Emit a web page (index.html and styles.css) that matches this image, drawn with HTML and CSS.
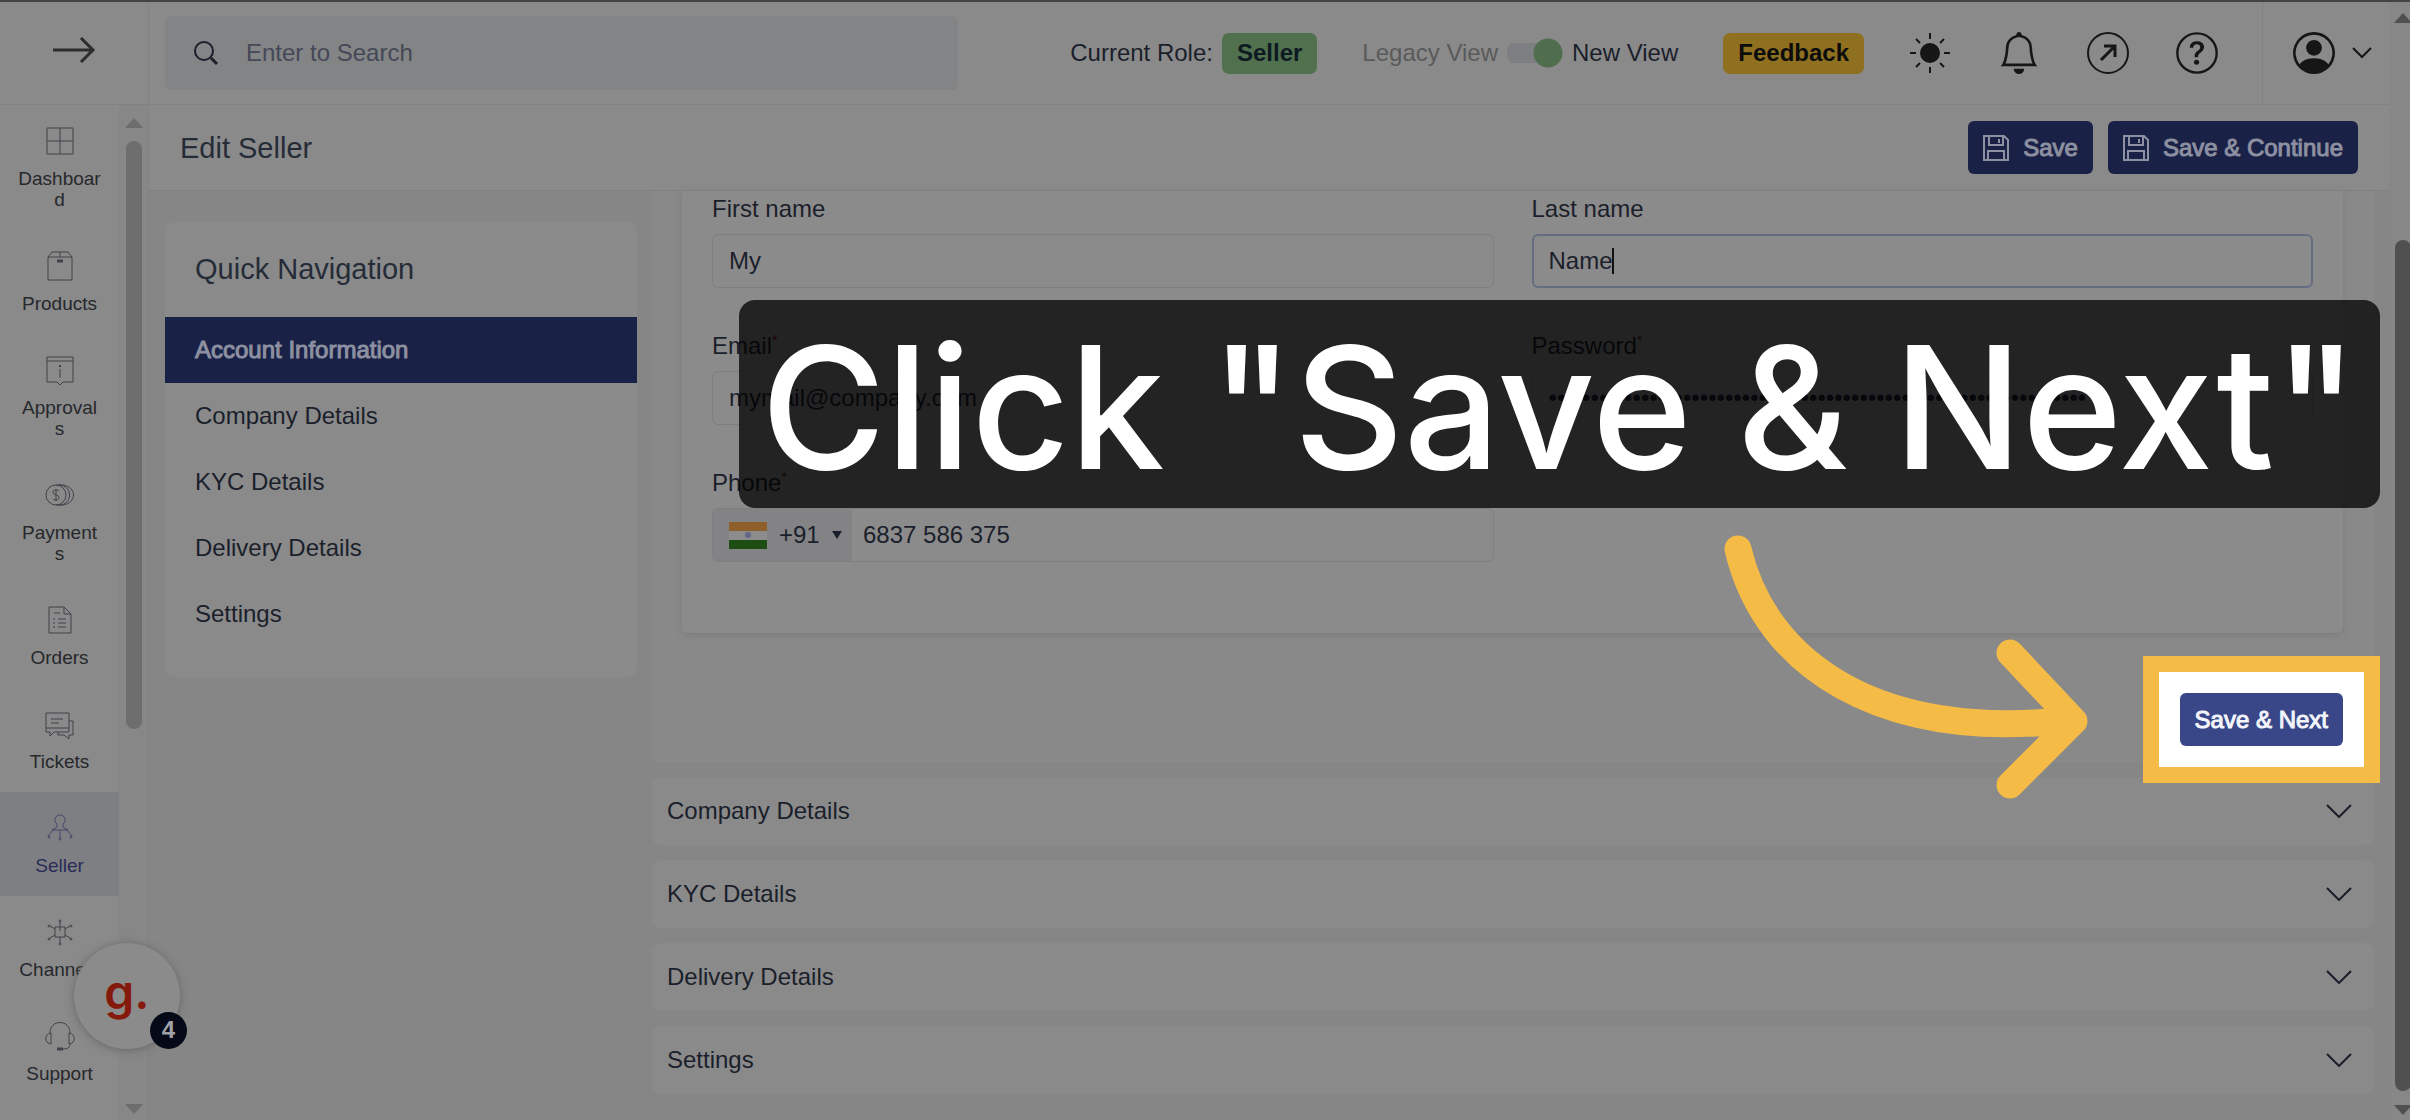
FILE: index.html
```html
<!DOCTYPE html>
<html lang="en">
<head>
    <meta charset="UTF-8">
    <meta name="viewport" content="width=device-width, initial-scale=1.0">
    <title>Edit Seller</title>
    <link rel="stylesheet" href="styles.css">
</head>
<body>

<div class="app">
    <aside class="sidebar">
        <button class="menu-toggle" aria-label="Expand menu">
            <svg width="44" height="30" viewBox="0 0 44 30"><path d="M1 15h40M29 3l12 12-12 12" stroke-width="3"/></svg>
        </button>
        <div class="sidebar-body">
            <nav class="menu">
                <a href="#" class="menu-item">
                    <svg viewBox="0 0 30 30"><path d="M2 2h26v26H2zM15 2v26M2 15h26"/></svg>
                    <span>Dashboard</span>
                </a>
                <a href="#" class="menu-item">
                    <svg viewBox="0 0 30 30"><path d="M3 6l4-5h16l4 5v23H3zM3 6h24M15 1v5"/><path d="M12 10h6" stroke-width="3"/></svg>
                    <span>Products</span>
                </a>
                <a href="#" class="menu-item">
                    <svg viewBox="0 0 30 30"><path d="M2 2h26v25H18l-3 3-3-3H2zM2 6h26M15 14v9"/><path d="M15 10v2" stroke-width="2"/></svg>
                    <span>Approvals</span>
                </a>
                <a href="#" class="menu-item">
                    <svg viewBox="0 0 30 30"><circle cx="11" cy="15" r="10"/><path d="M14 5c14 0 14 20 0 20M18 5c14 2 14 18 0 20M11 5h7M11 25h7M14 11c-2-2-6-1-6 1 0 4 6 2 6 6 0 2-4 3-6 1M11 9v12"/></svg>
                    <span>Payments</span>
                </a>
                <a href="#" class="menu-item">
                    <svg viewBox="0 0 30 30"><path d="M4 2h15l7 7v19H4zM19 2v7h7M9 8h6M13 14h8M13 18h8M13 22h8M8 14h2M8 18h2M8 22h2"/></svg>
                    <span>Orders</span>
                </a>
                <a href="#" class="menu-item">
                    <svg viewBox="0 0 30 30"><path d="M1 4h23v19H9l-4 4v-4H1zM24 12h4v14h-4v4l-5-4h-6v-3M1 19h23M6 10h12M6 14h8"/></svg>
                    <span>Tickets</span>
                </a>
                <a href="#" class="menu-item active">
                    <svg viewBox="0 0 30 30"><path d="M12 11c-4-3-2-9 3-9s7 6 3 9v3l5 3H7l5-3zM15 17v8M8 17l-5 6M22 17l5 6"/><circle cx="4" cy="24" r="1"/><circle cx="15" cy="26" r="1"/><circle cx="26" cy="24" r="1"/></svg>
                    <span>Seller</span>
                </a>
                <a href="#" class="menu-item">
                    <svg viewBox="0 0 30 30"><path d="M10 10h10v10H10zM15 10V4M15 20v6M10 12l-5-3M20 12l5-3M10 18l-5 3M20 18l5 3M15 10v4"/><circle cx="15" cy="4" r="1"/><circle cx="15" cy="27" r="1"/><circle cx="4" cy="9" r="1"/><circle cx="26" cy="9" r="1"/><circle cx="4" cy="22" r="1"/><circle cx="26" cy="22" r="1"/></svg>
                    <span>Channels</span>
                </a>
                <a href="#" class="menu-item">
                    <svg viewBox="0 0 30 30"><path d="M5 12C5-2 25-2 25 12M6 12v11c-7-1-7-10 0-11zM24 12v11c7-1 7-10 0-11zM25 23c0 4-3 5-7 5"/><path d="M12 28h6" stroke-width="3"/></svg>
                    <span>Support</span>
                </a>
            </nav>
            <div class="scroll scroll-menu">
                <span class="arrow-up"></span>
                <span class="thumb"></span>
                <span class="arrow-down"></span>
            </div>
        </div>
    </aside>

    <div class="page">
        <header class="topbar">
            <label class="search">
                <svg width="26" height="26" viewBox="0 0 26 26"><circle cx="11" cy="11" r="9" stroke-width="2"/><path d="M18 18l6 6" stroke-width="3"/></svg>
                <input type="text" placeholder="Enter to Search">
            </label>
            <div class="tools">
                <div class="pair">Current Role: <span class="badge role">Seller</span></div>
                <label class="pair">
                    <span class="muted">Legacy View</span>
                    <input type="checkbox" class="switch" checked>
                    New View
                </label>
                <button class="badge feedback">Feedback</button>
                <button class="icon-btn" aria-label="Theme">
                    <svg viewBox="0 0 42 42"><circle class="solid" cx="21" cy="21" r="10"/><path d="M21 1v6M21 35v6M1 21h6M35 21h6M7 7l4 4M31 31l4 4M35 7l-4 4M11 31l-4 4" stroke-width="2"/></svg>
                </button>
                <button class="icon-btn" aria-label="Notifications">
                    <svg viewBox="0 0 16 16"><path class="solid" d="M8 16a2 2 0 0 0 2-2H6a2 2 0 0 0 2 2M8 1.918l-.797.161A4 4 0 0 0 4 6c0 .628-.134 2.197-.459 3.742-.16.767-.376 1.566-.663 2.258h10.244c-.287-.692-.502-1.49-.663-2.258C12.134 8.197 12 6.628 12 6a4 4 0 0 0-3.203-3.92zM14.22 12c.223.447.481.801.78 1H1c.299-.199.557-.553.78-1C2.68 10.2 3 6.88 3 6c0-2.42 1.72-4.44 4.005-4.901a1 1 0 1 1 1.99 0A5 5 0 0 1 13 6c0 .88.32 4.2 1.22 6"/></svg>
                </button>
                <button class="icon-btn" aria-label="Open">
                    <svg viewBox="0 0 42 42"><circle cx="21" cy="21" r="20" stroke-width="2"/><path d="M14 28l14-14M17 14h11v11" stroke-width="3"/></svg>
                </button>
                <button class="icon-btn" aria-label="Help">
                    <svg viewBox="0 0 16 16"><circle cx="8" cy="8" r="7.5" stroke-width=".9"/><path class="solid" d="M5.255 5.786a.237.237 0 0 0 .241.247h.825c.138 0 .248-.113.266-.25.09-.656.54-1.134 1.342-1.134.686 0 1.314.343 1.314 1.168 0 .635-.374.927-.965 1.371-.673.489-1.206 1.06-1.168 1.987l.003.217a.25.25 0 0 0 .25.246h.811a.25.25 0 0 0 .25-.25v-.105c0-.718.273-.927 1.01-1.486.609-.463 1.244-.977 1.244-2.056 0-1.511-1.276-2.241-2.673-2.241-1.267 0-2.655.59-2.75 2.286m1.557 5.763c0 .533.425.927 1.01.927.609 0 1.028-.394 1.028-.927 0-.552-.42-.94-1.029-.94-.584 0-1.009.388-1.009.94"/></svg>
                </button>
            </div>
            <button class="user" aria-label="Account">
                <svg width="42" height="42" viewBox="0 0 16 16"><path class="solid" d="M11 6a3 3 0 1 1-6 0 3 3 0 0 1 6 0"/><path class="solid" fill-rule="evenodd" d="M0 8a8 8 0 1 1 16 0A8 8 0 0 1 0 8m8-7a7 7 0 0 0-5.468 11.37C3.242 11.226 4.805 10 8 10s4.757 1.225 5.468 2.37A7 7 0 0 0 8 1"/></svg>
                <svg width="20" height="12" viewBox="0 0 20 12"><path d="M1 1l9 9 9-9" stroke-width="2"/></svg>
            </button>
        </header>

        <div class="titlebar">
            <h1>Edit Seller</h1>
            <button class="btn">
                <svg width="26" height="26" viewBox="0 0 26 26"><path d="M1 1h20l4 4v20H1zM6 1v9h14V1M16 4v4M5 25v-9h16v9" stroke-width="2"/></svg>
                Save
            </button>
            <button class="btn">
                <svg width="26" height="26" viewBox="0 0 26 26"><path d="M1 1h20l4 4v20H1zM6 1v9h14V1M16 4v4M5 25v-9h16v9" stroke-width="2"/></svg>
                Save &amp; Continue
            </button>
        </div>

        <main class="content">
            <nav class="quick-nav">
                <h2>Quick Navigation</h2>
                <a href="#account" class="active">Account Information</a>
                <a href="#company">Company Details</a>
                <a href="#kyc">KYC Details</a>
                <a href="#delivery">Delivery Details</a>
                <a href="#settings">Settings</a>
            </nav>

            <div class="sections">
                <section class="account" id="account">
                    <form class="form-card">
                        <div class="field">
                            <label for="firstName">First name</label>
                            <input type="text" id="firstName" value="My">
                        </div>
                        <div class="field focused">
                            <label for="lastName">Last name</label>
                            <input type="text" id="lastName" value="Name">
                            <span class="caret"></span>
                        </div>
                        <div class="field">
                            <label for="email">Email<sup>*</sup></label>
                            <input type="email" id="email" value="mymail@company.com">
                        </div>
                        <div class="field">
                            <label for="password">Password<sup>*</sup></label>
                            <input type="password" id="password" value="0123456789012345678901234567890123456789012345678901234567890123">
                        </div>
                        <div class="field">
                            <label for="phone">Phone<sup>*</sup></label>
                            <div class="phone">
                                <div class="country">
                                    <svg class="flag" width="38" height="27" viewBox="0 0 38 27"><path d="M0 0h38v9H0z" fill="#8f5f2b"/><path d="M0 9h38v9H0z" fill="#8c8c8c"/><path d="M0 18h38v9H0z" fill="#1d4d12"/><circle cx="19" cy="13" r="3" fill="#66668a"/></svg>
                                    <select aria-label="Country code"><option>+91</option></select>
                                    <svg width="10" height="8" viewBox="0 0 10 8"><path class="solid" d="M0 0h10L5 8z"/></svg>
                                </div>
                                <input type="tel" id="phone" value="6837 586 375">
                            </div>
                        </div>
                    </form>
                    <div class="form-actions">
                        <span class="highlight"><button class="btn">Save &amp; Next</button></span>
                    </div>
                </section>

                <button class="panel" id="company">Company Details
                    <svg width="26" height="14" viewBox="0 0 26 14"><path d="M1 1l12 12L25 1" stroke-width="2"/></svg>
                </button>
                <button class="panel" id="kyc">KYC Details
                    <svg width="26" height="14" viewBox="0 0 26 14"><path d="M1 1l12 12L25 1" stroke-width="2"/></svg>
                </button>
                <button class="panel" id="delivery">Delivery Details
                    <svg width="26" height="14" viewBox="0 0 26 14"><path d="M1 1l12 12L25 1" stroke-width="2"/></svg>
                </button>
                <button class="panel" id="settings">Settings
                    <svg width="26" height="14" viewBox="0 0 26 14"><path d="M1 1l12 12L25 1" stroke-width="2"/></svg>
                </button>
            </div>
        </main>
    </div>

    <div class="scroll scroll-page">
        <span class="arrow-up"></span>
        <span class="thumb"></span>
        <span class="arrow-down"></span>
    </div>
</div>

<!-- Tour overlays -->
<div class="caption">Click "Save &amp; Next"</div>
<svg class="pointer" width="370" height="270" viewBox="0 0 370 270">
    <path d="M18 18C45 134 160 211 350 189M290 122l64 68-64 64"/>
</svg>
<button class="widget"><span class="logo">g.</span><span class="count">4</span></button>

</body>
</html>
```
FILE: styles.css
```css
* {
    box-sizing: border-box;
}
body {
    margin: 0;
    position: relative;
    font-family: "Liberation Sans", Arial, sans-serif;
    font-size: 24px;
    line-height: 28px;
    color: #1b1f2b;
    background-color: #868686;
    overflow: hidden;
}
button, input, select {
    font: inherit;
    color: inherit;
    border: 0;
    padding: 0;
    background: none;
}
svg {
    flex: none;
    fill: none;
    stroke: currentColor;
}
.solid {
    fill: currentColor;
    stroke: none;
}
a {
    color: inherit;
    text-decoration: none;
}
h1, h2 {
    margin: 0;
    font-size: 29px;
    font-weight: normal;
    line-height: 36px;
    color: #252c38;
}
.app {
    display: flex;
    min-height: 100vh;
    border-top: 2px solid #444;
}

/* Sidebar */
.sidebar {
    width: 149px;
    display: flex;
    flex-direction: column;
    background-color: #8a8a8a;
    border-right: 1px solid #828282;
}
.menu-toggle {
    height: 103px;
    border-bottom: 1px solid #828282;
    padding-bottom: 6px;
    display: flex;
    align-items: center;
    justify-content: center;
    color: #2c2c2c;
}
.sidebar-body {
    flex: 1;
    display: flex;
}
.menu {
    flex: 1;
}
.menu-item {
    display: flex;
    flex-direction: column;
    align-items: center;
    gap: 12px;
    padding: 21px 18px 20px;
    font-size: 19px;
    line-height: 21px;
    text-align: center;
    color: #26282c;
}
.menu-item svg {
    width: 30px;
    height: 30px;
    color: #404248;
}
.menu-item span {
    width: 100%;
    overflow-wrap: anywhere;
}
.menu-item.active {
    background-color: #7d7f83;
    color: #2b2c57;
}
.menu-item.active svg {
    color: #45466a;
}

/* Scroll bars */
.scroll {
    display: flex;
    flex-direction: column;
    align-items: center;
    color: #6e6e6e;
    background-color: #878787;
}
.thumb {
    width: 16px;
    border-radius: 8px;
    background-color: currentColor;
}
.arrow-up, .arrow-down {
    border: 9px solid transparent;
}
.arrow-up {
    border-top: 0;
    border-bottom: 10px solid currentColor;
}
.arrow-down {
    border-bottom: 0;
    border-top: 10px solid currentColor;
    margin-top: auto;
}
.scroll-menu {
    width: 29px;
    padding: 13px 0 6px;
}
.scroll-menu .thumb {
    margin-top: 13px;
    height: 59%;
}
.scroll-page {
    width: 21px;
    padding: 11px 0 5px 6px;
    color: #505050;
}
.scroll-page .thumb {
    flex: 1;
    margin: 217px 0 14px;
}

/* Top bar */
.page {
    flex: 1;
    min-width: 0;
}
.topbar {
    display: flex;
    align-items: stretch;
    height: 103px;
    padding-left: 16px;
    background-color: #8a8a8a;
    border-bottom: 1px solid #828282;
}
.search {
    flex: 0 1 793px;
    display: flex;
    align-items: center;
    gap: 27px;
    margin: 14px 0;
    padding: 0 28px;
    border-radius: 6px;
    background-color: #828486;
}
.search input {
    flex: 1;
}
.search input::placeholder {
    color: #454856;
    opacity: 1;
}
.tools {
    margin-left: auto;
    display: flex;
    align-items: center;
    gap: 45px;
    padding-right: 44px;
    white-space: nowrap;
}
.pair {
    display: flex;
    align-items: center;
    gap: 9px;
}
.muted {
    color: #5a5a5a;
}
.badge {
    padding: 6px 15px 7px;
    border-radius: 7px;
    font-weight: bold;
}
.role {
    background-color: #50704e;
    color: #0e1a22;
}
.feedback {
    background-color: #8e7020;
    color: #0c0c0c;
}
.switch {
    appearance: none;
    width: 56px;
    height: 30px;
    margin: 0;
    border-radius: 15px;
    background: radial-gradient(circle at 41px 15px, #506d4e 14px, transparent 15px), linear-gradient(#7d7f82, #7d7f82) 0 5px / 42px 20px no-repeat;
}
.icon-btn {
    height: 42px;
    color: #161616;
}
.icon-btn svg {
    width: 42px;
    height: 42px;
}
.icon-btn + .icon-btn {
    margin-left: 2px;
}
.user {
    width: 127px;
    display: flex;
    align-items: center;
    justify-content: flex-end;
    gap: 17px;
    padding-right: 17px;
    border-left: 1px solid #808080;
    color: #161616;
}

/* Title bar */
.titlebar {
    display: flex;
    align-items: center;
    gap: 15px;
    height: 86px;
    padding: 0 31px;
    background-color: #8a8a8a;
    border-bottom: 1px solid #808080;
}
.titlebar h1 {
    flex: 1;
}
.btn {
    display: flex;
    align-items: center;
    gap: 14px;
    height: 53px;
    padding: 0 15px;
    border-radius: 6px;
    background-color: #192147;
    color: #8d90a0;
    -webkit-text-stroke: 1px;
    white-space: nowrap;
}

/* Content */
.content {
    display: flex;
    align-items: flex-start;
    gap: 15px;
    padding: 0 15px 0 16px;
}
.quick-nav {
    flex: 0 1 472px;
    margin-top: 31px;
    padding-bottom: 30px;
    border-radius: 9px;
    background-color: #8a8a8a;
    white-space: nowrap;
}
.quick-nav h2 {
    padding: 29px 30px 30px;
}
.quick-nav a {
    display: block;
    padding: 19px 30px;
}
.quick-nav .active {
    background-color: #192147;
    color: #8d90a0;
    -webkit-text-stroke: 1px;
}
.sections {
    flex: 1;
    min-width: 0;
    display: flex;
    flex-direction: column;
    gap: 15px;
}
.account {
    padding: 0 31px 16px 30px;
    background-color: #898989;
}
.form-card {
    display: grid;
    grid-template-columns: 1fr 1fr;
    gap: 44px 38px;
    padding: 4px 30px 71px;
    border-radius: 0 0 6px 6px;
    background-color: #8b8b8b;
    box-shadow: 0 2px 6px #7c7c7c;
}
.field {
    position: relative;
    display: flex;
    flex-direction: column;
    gap: 11px;
}
.field sup {
    font-size: 14px;
    line-height: 0;
    color: #5c1717;
}
.field > input, .phone {
    height: 54px;
    padding: 0 16px;
    border: 1px solid #7e7f83;
    border-radius: 6px;
}
.focused > input {
    padding: 0 15px;
    border: 2px solid #656d83;
}
.caret {
    position: absolute;
    left: 80px;
    bottom: 14px;
    width: 2px;
    height: 26px;
    background-color: #111;
}
.phone {
    display: flex;
    padding: 0;
}
.phone input {
    flex: 1;
    padding: 0 11px;
}
.country {
    display: flex;
    align-items: center;
    gap: 12px;
    width: 139px;
    padding-left: 16px;
    background-color: #838385;
}
.country select {
    appearance: none;
    width: 41px;
}
.flag {
    stroke: none;
}
.form-actions {
    display: flex;
    justify-content: flex-end;
    padding-top: 60px;
}
.panel {
    display: flex;
    align-items: center;
    justify-content: space-between;
    height: 68px;
    padding: 0 22px 0 15px;
    border-radius: 8px;
    background-color: #8a8a8a;
}

/* Tour overlays */
.highlight {
    position: relative;
    z-index: 1;
    margin: -37px -37px -37px 0;
    padding: 21px;
    border: 16px solid #f5bb47;
    background-color: #fff;
}
.highlight .btn {
    background-color: #394788;
    color: #f4f5fa;
}
.caption {
    position: absolute;
    top: 300px;
    right: 30px;
    padding: 6px 22px 0;
    border-radius: 16px;
    background-color: rgba(0, 0, 0, 0.75);
    color: #fff;
    font-family: Inter, sans-serif;
    font-size: 170px;
    font-weight: 500;
    line-height: 202px;
    white-space: nowrap;
}
.pointer {
    position: absolute;
    top: 531px;
    right: 320px;
    stroke: #f5bb47;
    stroke-width: 27px;
    stroke-linecap: round;
    stroke-linejoin: round;
}
.widget {
    position: absolute;
    left: 74px;
    top: 943px;
    width: 106px;
    height: 106px;
    border-radius: 50%;
    background-color: #8b8b8b;
    box-shadow: 0 1px 8px #666;
}
.logo {
    font-family: Inter, sans-serif;
    font-size: 48px;
    font-weight: 600;
    color: #85190c;
}
.count {
    position: absolute;
    right: -7px;
    bottom: 0;
    width: 37px;
    height: 37px;
    border-radius: 50%;
    background-color: #050918;
    color: #a0a2a8;
    font-weight: bold;
    line-height: 36px;
}
```
